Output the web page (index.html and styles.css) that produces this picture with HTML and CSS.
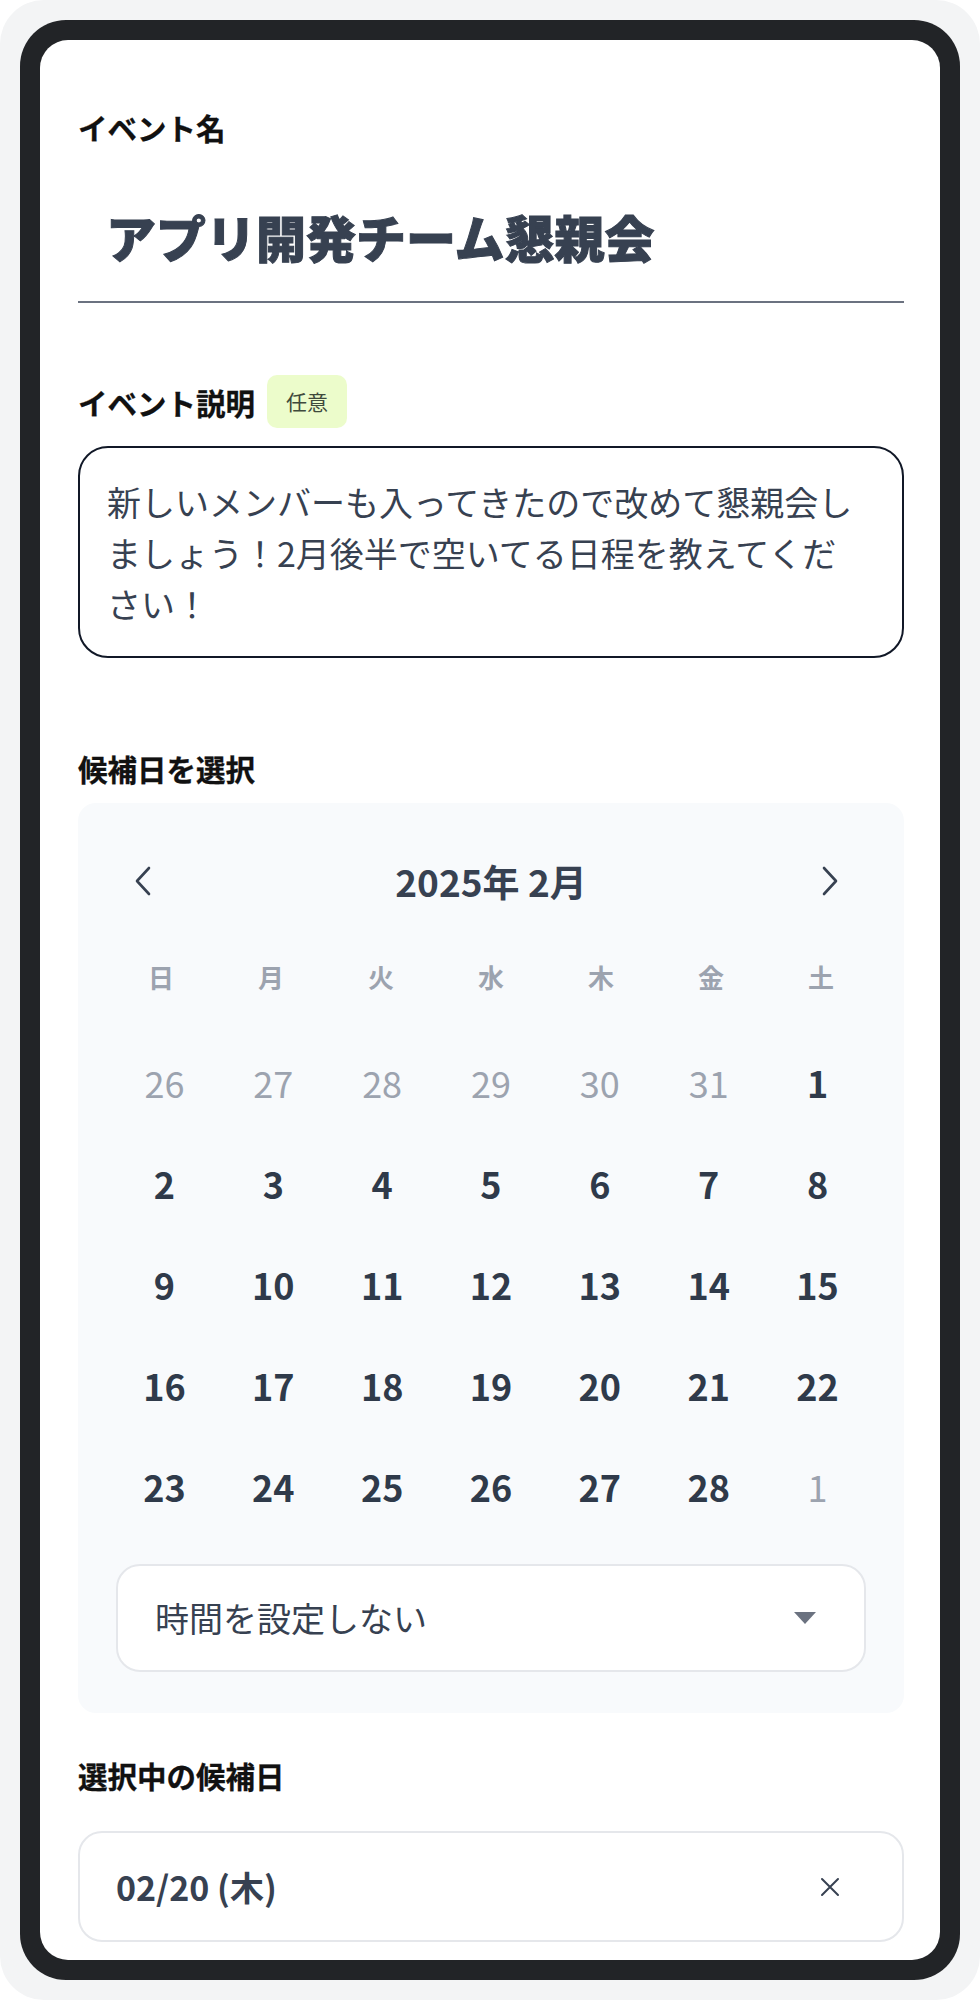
FILE: index.html
```html
<!DOCTYPE html>
<html lang="ja">
<head>
    <meta charset="UTF-8">
    <meta name="viewport" content="width=device-width, initial-scale=1.0">
    <title>イベント作成</title>
    <link rel="stylesheet" href="styles.css">
</head>
<body>
    <div class="device-bg">
        <div class="phone">
            <div class="screen">

                <div class="field field-title">
                    <div class="label-row"><label for="eventName" class="field-label">イベント名</label></div>
                    <input type="text" id="eventName" class="title-input" value="アプリ開発チーム懇親会">
                </div>

                <div class="field field-desc">
                    <div class="label-row">
                        <label for="eventDesc" class="field-label">イベント説明</label>
                        <span class="badge">任意</span>
                    </div>
                    <textarea id="eventDesc" class="desc-input">新しいメンバーも入ってきたので改めて懇親会しましょう！2月後半で空いてる日程を教えてください！</textarea>
                </div>

                <div class="field field-dates">
                    <div class="label-row"><span class="field-label">候補日を選択</span></div>
                    <div class="calendar">
                        <div class="cal-header">
                            <button class="cal-nav cal-prev" aria-label="前の月">
                                <svg width="20" height="32" viewBox="0 0 20 32"><path d="M16 3 L4 16 L16 29" fill="none" stroke="#374151" stroke-width="2.6" stroke-linecap="round" stroke-linejoin="round"/></svg>
                            </button>
                            <div class="cal-title">2025年 2月</div>
                            <button class="cal-nav cal-next" aria-label="次の月">
                                <svg width="20" height="32" viewBox="0 0 20 32"><path d="M4 3 L16 16 L4 29" fill="none" stroke="#374151" stroke-width="2.6" stroke-linecap="round" stroke-linejoin="round"/></svg>
                            </button>
                        </div>
                        <div class="cal-weekdays">
                            <span>日</span><span>月</span><span>火</span><span>水</span><span>木</span><span>金</span><span>土</span>
                        </div>
                        <div class="cal-days" id="calDays"></div>
                        <div class="time-select">
                            <span>時間を設定しない</span>
                            <svg width="22" height="12" viewBox="0 0 22 12"><path d="M0 0 H22 L11 12 Z" fill="#6b7280"/></svg>
                        </div>
                    </div>
                </div>

                <div class="field">
                    <div class="label-row"><span class="field-label">選択中の候補日</span></div>
                    <div class="selected-item">
                        <span class="selected-date">02/20 (木)</span>
                        <button class="remove-btn" aria-label="削除">
                            <svg width="20" height="20" viewBox="0 0 20 20"><path d="M2 2 L18 18 M18 2 L2 18" stroke="#374151" stroke-width="2" stroke-linecap="round"/></svg>
                        </button>
                    </div>
                </div>

            </div>
        </div>
    </div>

    <script>
        // 2025年2月のカレンダー
        const days = [];
        for (let d = 26; d <= 31; d++) days.push({ n: d, other: true });
        for (let d = 1; d <= 28; d++) days.push({ n: d, other: false });
        days.push({ n: 1, other: true });

        document.getElementById('calDays').innerHTML = days.map(day =>
            `<span class="day${day.other ? ' day-other' : ''}">${day.n}</span>`
        ).join('');
    </script>
</body>
</html>
```

FILE: styles.css
```css
* { margin: 0; padding: 0; box-sizing: border-box; font-family: 'Noto Sans CJK JP', 'Noto Sans', sans-serif; }
body { background: #fff; width: 980px; height: 2002px; }
.device-bg { height: 2000px; background: #f3f4f5; border-radius: 44px; padding: 20px; }
.phone { height: 1960px; background: #222427; border-radius: 46px; padding: 20px; }
.screen { height: 1920px; background: #fff; border-radius: 28px; overflow: hidden; padding: 65px 36px 0 38px; }

.label-row { display: flex; align-items: center; gap: 12px; }
.field-label { font-size: 29.5px; line-height: 44px; font-weight: 700; color: #111; -webkit-text-stroke: 0.3px #111; }
.badge { background: #ecfccb; color: #3f4a3c; font-size: 21px; line-height: 53px; padding: 0 19px; border-radius: 10px; }

.field-title { margin-bottom: 72px; }
.field-desc { margin-bottom: 88px; }
.field-dates { margin-bottom: 40px; }

.title-input { display: block; width: 100%; margin-top: 16px; padding: 36px 28px 30px; border: none; border-bottom: 2px solid #6b7280; font-size: 50px; line-height: 70px; height: 138px; font-weight: 900; color: #374151; -webkit-text-stroke: 1px #374151; background: transparent; outline: none; }
.desc-input { display: block; width: 100%; height: 212px; margin-top: 18px; padding: 28px 32px 27px 27px; border: 2px solid #111827; border-radius: 30px; font-size: 34px; line-height: 51px; color: #374151; resize: none; overflow: hidden; outline: none; }

.calendar { margin-top: 13px; background: #f8fafc; border-radius: 18px; padding: 40px 28px 41px; }
.cal-header { display: grid; grid-template-columns: 1fr auto 1fr; align-items: center; height: 76px; }
.cal-nav { width: 48px; height: 48px; border: none; background: transparent; display: flex; align-items: center; justify-content: center; cursor: pointer; }
.cal-prev { justify-self: start; margin-left: 13px; }
.cal-next { justify-self: end; margin-right: 22px; }
.cal-title { font-size: 37px; font-weight: 700; color: #374151; }
.cal-weekdays { display: grid; grid-template-columns: repeat(7, 1fr); margin-top: 27px; height: 60px; align-items: center; text-align: center; font-size: 26px; font-weight: 700; color: #9ca3af; }
.cal-days { display: grid; grid-template-columns: repeat(7, 1fr); grid-auto-rows: 101px; margin: 25px 4px 0; }
.day { display: flex; align-items: center; justify-content: center; font-size: 36px; font-weight: 700; color: #2f3a4a; }
.day-other { font-weight: 400; color: #9ca3af; }

.time-select { display: flex; align-items: center; justify-content: space-between; margin: 28px 10px 0; padding: 27px 48px 27px 37px; background: #fff; border: 2px solid #e5e7eb; border-radius: 24px; font-size: 34px; line-height: 50px; color: #374151; }

.selected-item { display: flex; align-items: center; justify-content: space-between; margin-top: 34px; height: 111px; padding: 0 62px 0 36px; border: 2px solid #e5e7eb; border-radius: 24px; }
.selected-date { font-size: 34px; font-weight: 700; color: #374151; }
.remove-btn { border: none; background: transparent; display: flex; cursor: pointer; }
```
